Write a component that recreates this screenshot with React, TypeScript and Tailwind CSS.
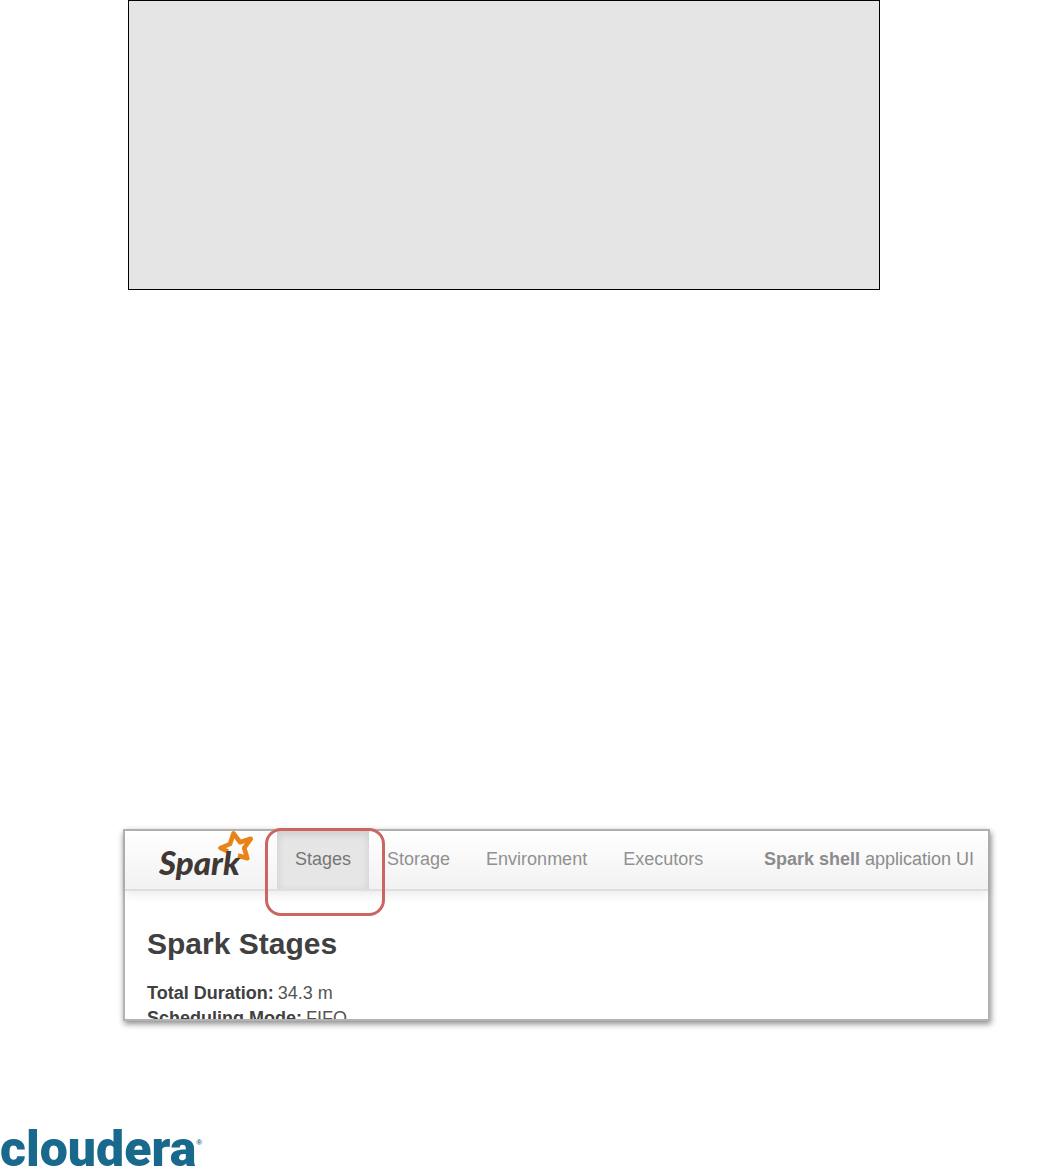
import React from 'react';

const tabs = [
    { label: 'Stages', active: true },
    { label: 'Storage', active: false },
    { label: 'Environment', active: false },
    { label: 'Executors', active: false },
];

const SparkLogo: React.FC = () => (
    <svg
        className="h-[52px] w-[100px] shrink-0"
        viewBox="0 0 100 52"
        role="img"
        aria-label="Spark"
    >
        <path
            d="M69 20.5 L61.5 17 L71 13 L74.5 2.4 L81 11.2 L91.7 7.8 L85.2 17 L88.3 27.3 L79 24.5"
            fill="none"
            stroke="#e98217"
            strokeWidth="4.6"
            strokeLinejoin="round"
        />
        <text
            x="0"
            y="44"
            className="fill-[#3f3835] font-['Lato',sans-serif] text-[33px] font-black italic"
        >
            Spark
        </text>
    </svg>
);

const NavBar: React.FC = () => (
    <nav className="flex h-[60px] items-stretch border-b-2 border-[#dfdfdf] bg-linear-to-b from-white to-[#f2f2f2] pr-[14px] pl-[34px] text-[18px] shadow-[0_3px_10px_rgba(0,0,0,0.09)]">
        <a href="#" className="mr-[18px] shrink-0">
            <SparkLogo />
        </a>
        <ul className="flex">
            {tabs.map((tab) => (
                <li key={tab.label} className="relative flex">
                    <a
                        href="#"
                        className={`flex items-center px-[18px] pb-0.5 ${
                            tab.active
                                ? 'bg-[#e6e6e6] text-[#777777] shadow-[inset_0_3px_8px_rgba(0,0,0,0.12)]'
                                : 'text-[#919191]'
                        }`}
                    >
                        {tab.label}
                    </a>
                    {/* callout around the selected tab */}
                    {tab.active && (
                        <span className="pointer-events-none absolute -top-[3px] -right-4 -left-3 z-10 h-[88px] rounded-2xl border-3 border-[#cc6460]" />
                    )}
                </li>
            ))}
        </ul>
        <p className="ml-auto flex items-center pb-0.5 whitespace-pre text-[#8c8c8c]">
            <strong>Spark shell</strong> application UI
        </p>
    </nav>
);

export default function App() {
    return (
        <main className="bg-white font-['Liberation_Sans',Arial,sans-serif]">
            <div className="mr-[165px] ml-32 h-[290px] border border-black bg-[#e5e5e5]" />

            <section className="mt-[539px] mr-[55px] ml-[123px] border-2 border-[#b3b3b3] bg-white shadow-[1px_3px_6px_rgba(0,0,0,0.45)]">
                <NavBar />
                {/* the second row runs under the lower edge */}
                <div className="h-[128px] overflow-hidden px-[22px] pt-[33px] text-[#404040]">
                    <h1 className="text-[30px] leading-[40px] font-bold">Spark Stages</h1>
                    <dl className="mt-[17px] text-[18px] leading-[25px]">
                        <div className="flex gap-1">
                            <dt className="font-bold">Total Duration:</dt>
                            <dd className="text-[#555555]">34.3 m</dd>
                        </div>
                        <div className="flex gap-1">
                            <dt className="font-bold">Scheduling Mode:</dt>
                            <dd className="text-[#555555]">FIFO</dd>
                        </div>
                    </dl>
                </div>
            </section>

            <footer className="mt-[102px] flex items-start text-[#19698c]">
                <span className="font-['Roboto',sans-serif] text-[50px] leading-[53px] font-black">
                    cloudera
                </span>
                <sup className="top-0 mt-4 text-[8px] leading-[8px] font-bold">®</sup>
            </footer>
        </main>
    );
}
